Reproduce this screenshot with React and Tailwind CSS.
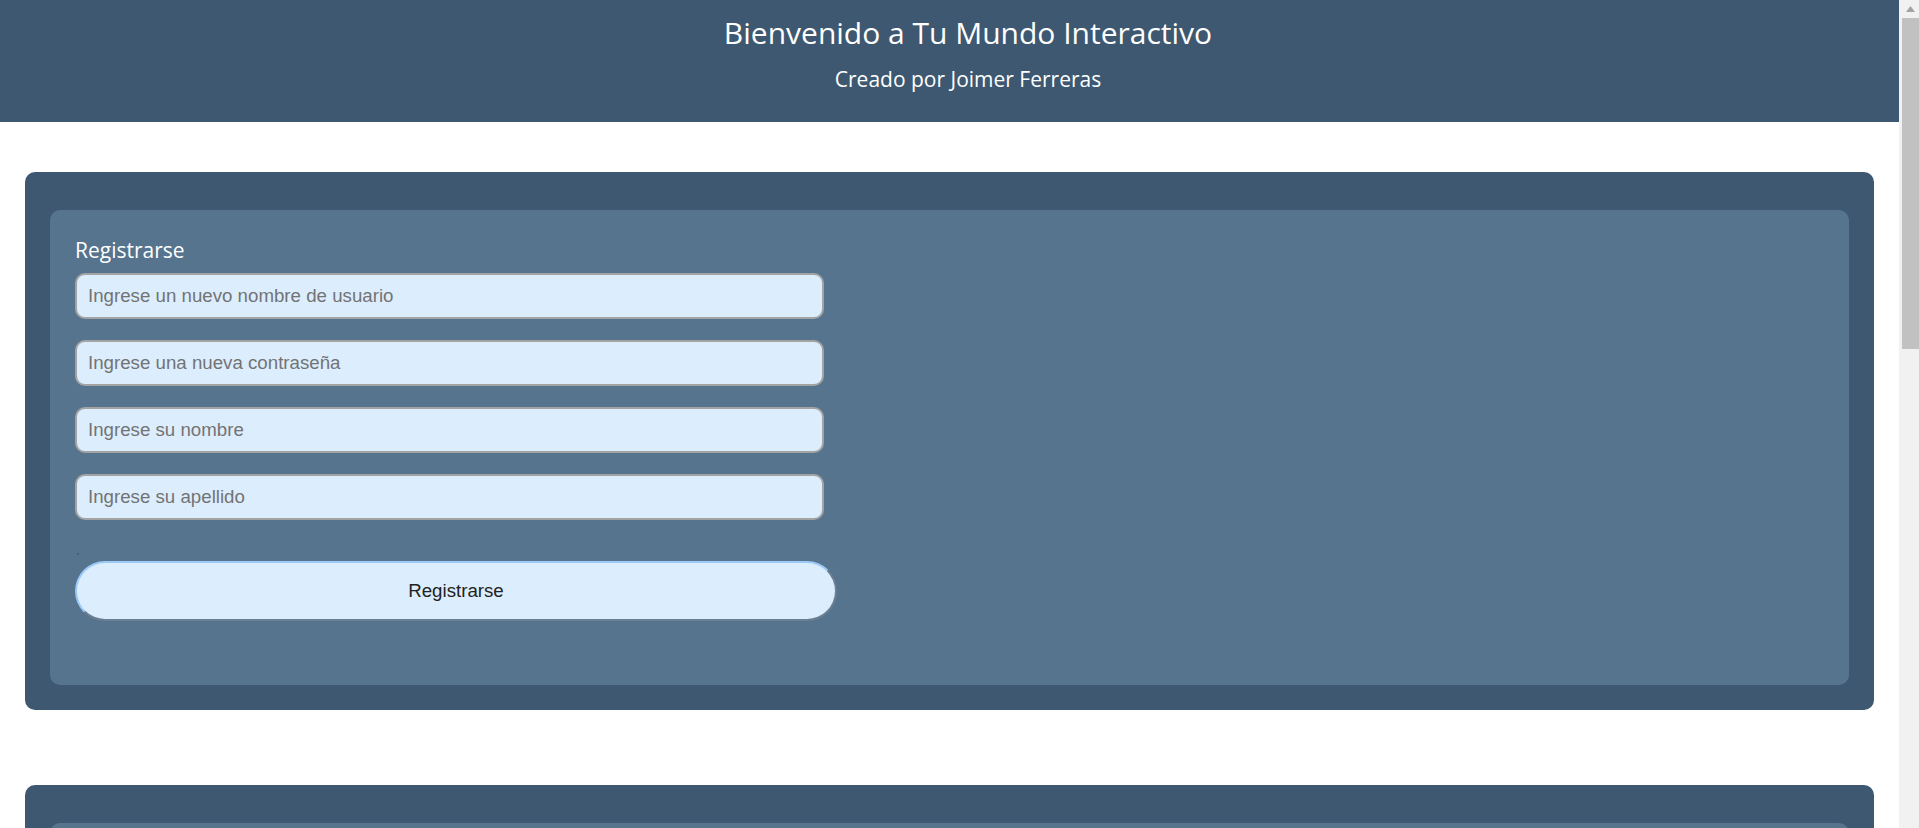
import React, { useState } from "react";

const inputClass =
  "block w-[749px] h-[46px] px-[11px] rounded-[10px] border-2 border-[#a3a3a3] bg-[#dceefe] text-[18.7px] text-[#333] placeholder:text-[#737373] outline-none";

const buttonClass =
  "block h-[60px] w-[762px] rounded-full border-2 border-t-[#9ccaf7] border-l-[#9ccaf7] border-b-[#6b7f93] border-r-[#6b7f93] bg-[#dceefe] text-[18.7px] text-[#222]";

const Card = ({ children }) => (
  <section className="rounded-[10px] bg-[#3d5870] px-[25px] pt-[38px] pb-[25px]">
    <div className="rounded-[10px] bg-[#56748e] px-[25px] pt-[26px] pb-[64px]">{children}</div>
  </section>
);

// barra de desplazamiento como en la captura
const Scrollbar = () => (
  <aside className="sticky top-0 flex h-screen w-[20px] shrink-0 flex-col items-end bg-[#f1f1f1]">
    <div className="flex h-[17px] w-[17px] items-center justify-center">
      <svg width="9" height="6" viewBox="0 0 9 6">
        <path d="M4.5 0 L9 6 L0 6 Z" fill="#a3a3a3" />
      </svg>
    </div>
    <div className="mt-[1px] h-[331px] w-[17px] bg-[#c1c1c1]"></div>
  </aside>
);

const App = () => {
  const [form, setForm] = useState({ usuario: "", clave: "", nombre: "", apellido: "" });
  const [login, setLogin] = useState({ usuario: "", clave: "" });

  const update = (key) => (e) => setForm({ ...form, [key]: e.target.value });

  return (
    <div className="flex min-h-screen items-start bg-white font-['Liberation_Sans',Arial,sans-serif]">
      <div className="min-w-0 flex-1">
        <header className="h-[122px] bg-[#3d5870] pl-[37px] pt-[13px] text-center text-white font-['Open_Sans',sans-serif]">
          <h1 className="text-[30px] leading-[40px]">Bienvenido a Tu Mundo Interactivo</h1>
          <p className="mt-[12px] text-[21px] leading-[28px]">Creado por Joimer Ferreras</p>
        </header>

        <main className="mx-[25px] mt-[50px] flex flex-col gap-[75px] pb-[60px]">
          <Card>
            <h2 className="text-[21px] leading-[28px] text-white font-['Open_Sans',sans-serif]">Registrarse</h2>
            <div className="mt-[9px] flex flex-col gap-[21px]">
              <input className={inputClass} placeholder="Ingrese un nuevo nombre de usuario" value={form.usuario} onChange={update("usuario")} />
              <input className={inputClass} type="password" placeholder="Ingrese una nueva contraseña" value={form.clave} onChange={update("clave")} />
              <input className={inputClass} placeholder="Ingrese su nombre" value={form.nombre} onChange={update("nombre")} />
              <input className={inputClass} placeholder="Ingrese su apellido" value={form.apellido} onChange={update("apellido")} />
            </div>
            <div className="mt-[33px] ml-[2px] h-[2px] w-[2px] bg-[#4a5e73]"></div>
            <button type="button" className={`mt-[6px] ${buttonClass}`}>
              Registrarse
            </button>
          </Card>

          <Card>
            <h2 className="text-[21px] leading-[28px] text-white font-['Open_Sans',sans-serif]">Iniciar Sesión</h2>
            <div className="mt-[9px] flex flex-col gap-[21px]">
              <input className={inputClass} placeholder="Ingrese su nombre de usuario" value={login.usuario} onChange={(e) => setLogin({ ...login, usuario: e.target.value })} />
              <input className={inputClass} type="password" placeholder="Ingrese su contraseña" value={login.clave} onChange={(e) => setLogin({ ...login, clave: e.target.value })} />
            </div>
            <button type="button" className={`mt-[41px] ${buttonClass}`}>
              Iniciar Sesión
            </button>
          </Card>
        </main>
      </div>
      <Scrollbar />
    </div>
  );
};

export default App;
